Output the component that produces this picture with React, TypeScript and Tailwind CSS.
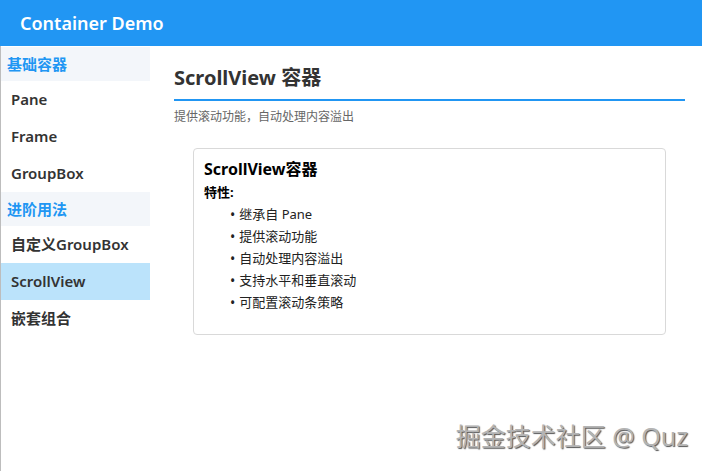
import React from "react";

const font = { fontFamily: '"Noto Sans", "Noto Sans CJK SC", sans-serif' };

type NavItem = { label: string; header?: boolean; active?: boolean };

const nav: NavItem[] = [
  { label: "基础容器", header: true },
  { label: "Pane" },
  { label: "Frame" },
  { label: "GroupBox" },
  { label: "进阶用法", header: true },
  { label: "自定义GroupBox" },
  { label: "ScrollView", active: true },
  { label: "嵌套组合" },
];

const features = [
  "继承自 Pane",
  "提供滚动功能",
  "自动处理内容溢出",
  "支持水平和垂直滚动",
  "可配置滚动条策略",
];

function Sidebar() {
  return (
    <div className="w-[149px] shrink-0 pt-px">
      {nav.map((item) =>
        item.header ? (
          <div
            key={item.label}
            className="h-[34px] flex items-center pl-[6px] bg-[#f3f6fa] text-[#2196f3] text-[15px] font-bold"
          >
            {item.label}
          </div>
        ) : (
          <div
            key={item.label}
            className={`h-[37px] flex items-center pl-[10px] text-[15px] font-semibold text-[#333] ${
              item.active ? "bg-[#bbe3fb]" : ""
            }`}
          >
            {item.label}
          </div>
        )
      )}
    </div>
  );
}

export default function App() {
  return (
    <div className="w-[702px] h-[471px] bg-white flex flex-col overflow-hidden relative" style={font}>
      <header className="h-[46px] shrink-0 bg-[#2196f3] flex items-center pl-5">
        <h1 className="text-white text-[18px] font-semibold">Container Demo</h1>
      </header>
      <div className="flex flex-1 border-l border-[#bdbdbd]">
        <Sidebar />
        <main className="flex-1 pl-[24px] pr-[17px] pt-[17px]">
          <h2 className="text-[20px] font-bold text-[#333] leading-[30px]">ScrollView 容器</h2>
          <div className="h-[2px] bg-[#2196f3] mt-[6px]" />
          <p className="text-[12px] text-[#666] mt-[7px]">提供滚动功能，自动处理内容溢出</p>
          <div className="mt-[22px] ml-[19px] mr-[19px] h-[187px] border border-[#d9d9d9] rounded-[4px] pl-[10px] pt-[9px]">
            <h3 className="text-[16px] font-bold text-black leading-[22px]">ScrollView容器</h3>
            <div className="text-[13px] font-bold text-black mt-[3px]">特性:</div>
            <ul className="pl-[26px] mt-[1px]">
              {features.map((f) => (
                <li key={f} className="text-[13px] text-[#222] h-[22px] flex items-center">
                  <span className="mr-[4px] text-[14px]">•</span>
                  {f}
                </li>
              ))}
            </ul>
          </div>
        </main>
      </div>
      <div
        className="absolute right-[14px] bottom-[16px] text-[25px] text-[#b4b4b4]"
        style={{ textShadow: "1px 1px 1px #555, -1px -1px 0 #fff" }}
      >
        掘金技术社区 @ Quz
      </div>
    </div>
  );
}
